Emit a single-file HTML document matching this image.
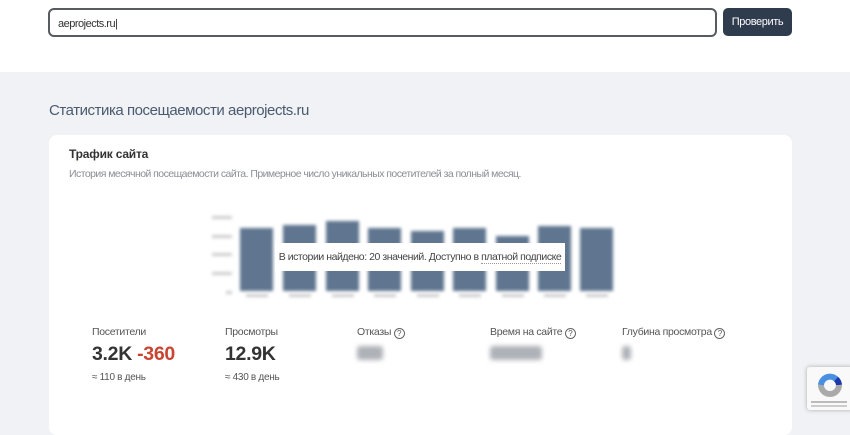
<!DOCTYPE html>
<html><head><meta charset="utf-8"><style>
*{margin:0;padding:0;box-sizing:border-box}
body{width:850px;height:415px;overflow:hidden;background:#f0f2f5;font-family:"Liberation Sans",sans-serif;position:relative}
.top{position:absolute;left:0;top:0;width:850px;height:72px;background:#fff}
.inp{position:absolute;left:48px;top:8px;width:669px;height:29px;border:2px solid #585c62;border-radius:6px;background:#fff;font-size:11px;color:#333;padding:8px 0 0 8px;letter-spacing:-0.5px}
.btn{position:absolute;left:723px;top:8px;width:69px;height:28px;background:#2f3c4e;border-radius:5px;color:#fff;font-size:11px;text-align:center;line-height:28px;letter-spacing:-0.4px}
h1{position:absolute;left:49px;top:102px;font-size:15px;font-weight:normal;color:#4b5a6e;letter-spacing:-0.45px;white-space:nowrap}
.card{position:absolute;left:49px;top:135px;width:743px;height:300px;background:#fff;border-radius:8px}
.t{position:absolute;left:69px;top:147px;font-size:12px;font-weight:bold;color:#333;letter-spacing:-0.2px}
.d{position:absolute;left:69px;top:168px;font-size:10.5px;color:#8a8f95;letter-spacing:-0.55px;white-space:nowrap}
.bar{position:absolute;background:#5f7590;filter:blur(1.5px);width:33px}
.ax{position:absolute;left:212px;width:20px;height:3px;background:#ccc;filter:blur(1.5px)}
.xl{position:absolute;top:294px;width:22px;height:3px;background:#ccc;filter:blur(1.5px)}
.ov{position:absolute;left:275px;top:243px;width:290px;height:28px;background:#fff;font-size:10.5px;color:#444;line-height:28px;text-align:center;letter-spacing:-0.45px;white-space:nowrap}
.ov u{text-decoration:none;border-bottom:1px dotted #999}
.lab{position:absolute;top:326px;font-size:10.5px;color:#555;letter-spacing:-0.3px;white-space:nowrap}
.q{display:inline-block;width:11px;height:11px;border:1px solid #666;border-radius:50%;font-size:8px;text-align:center;line-height:9px;vertical-align:-1px;letter-spacing:0}
.big{position:absolute;top:343px;font-size:19.5px;font-weight:bold;color:#333;letter-spacing:-0.3px}
.big span{color:#c9452f}
.sub{position:absolute;top:372px;font-size:10px;color:#555;letter-spacing:-0.3px}
.blur{position:absolute;top:346px;height:14px;background:#aeb2b8;filter:blur(2.5px);border-radius:3px}
.rc{position:absolute;left:807px;top:367px;width:48px;height:43px;background:#f9f9f9;box-shadow:0 0 4px #aaa;border-radius:3px}
.rc i{position:absolute;left:4px;top:34px;width:36px;height:2px;background:#bbb}
.rc b{position:absolute;left:4px;top:38px;width:36px;height:2px;background:#ccc}
</style></head><body>
<div class="top"></div>
<div class="inp">aeprojects.ru|</div>
<div class="btn">Проверить</div>
<h1>Статистика посещаемости aeprojects.ru</h1>
<div class="card"></div>
<div class="t">Трафик сайта</div>
<div class="d">История месячной посещаемости сайта. Примерное число уникальных посетителей за полный месяц.</div>
<div class="ax" style="top:216px"></div><div class="ax" style="top:235px"></div><div class="ax" style="top:253px"></div><div class="ax" style="top:272px"></div><div class="ax" style="top:291px;left:226px;width:6px"></div>
<div class="bar" style="left:240px;top:228px;height:63px"></div>
<div class="bar" style="left:283px;top:225px;height:66px"></div>
<div class="bar" style="left:326px;top:221px;height:70px"></div>
<div class="bar" style="left:368px;top:228px;height:63px"></div>
<div class="bar" style="left:411px;top:231px;height:60px"></div>
<div class="bar" style="left:453px;top:228px;height:63px"></div>
<div class="bar" style="left:496px;top:236px;height:55px"></div>
<div class="bar" style="left:538px;top:226px;height:65px"></div>
<div class="bar" style="left:580px;top:228px;height:63px"></div>
<div class="xl" style="left:246px"></div><div class="xl" style="left:289px"></div><div class="xl" style="left:332px"></div><div class="xl" style="left:374px"></div><div class="xl" style="left:417px"></div><div class="xl" style="left:459px"></div><div class="xl" style="left:502px"></div><div class="xl" style="left:544px"></div><div class="xl" style="left:586px"></div>
<div class="ov">В истории найдено: 20 значений. Доступно в <u>платной подписке</u></div>
<div class="lab" style="left:92px">Посетители</div>
<div class="lab" style="left:225px">Просмотры</div>
<div class="lab" style="left:357px">Отказы <span class="q">?</span></div>
<div class="lab" style="left:490px">Время на сайте <span class="q">?</span></div>
<div class="lab" style="left:622px">Глубина просмотра <span class="q">?</span></div>
<div class="big" style="left:92px">3.2K <span>-360</span></div>
<div class="big" style="left:225px">12.9K</div>
<div class="blur" style="left:357px;width:26px"></div>
<div class="blur" style="left:490px;width:52px"></div>
<div class="blur" style="left:622px;width:9px"></div>
<div class="sub" style="left:92px">≈ 110 в день</div>
<div class="sub" style="left:225px">≈ 430 в день</div>
<div class="rc"><svg width="30" height="28" viewBox="0 0 30 28" style="position:absolute;left:8px;top:4px"><path d="M6 14a9 9 0 0 1 15-6" stroke="#4a90e2" stroke-width="6" fill="none"/><path d="M21 8a9 9 0 0 1 3 6" stroke="#1c3aa9" stroke-width="6" fill="none"/><path d="M24 14a9 9 0 0 1-18 0" stroke="#aaa" stroke-width="6" fill="none"/></svg><i></i><b></b></div>
</body></html>
